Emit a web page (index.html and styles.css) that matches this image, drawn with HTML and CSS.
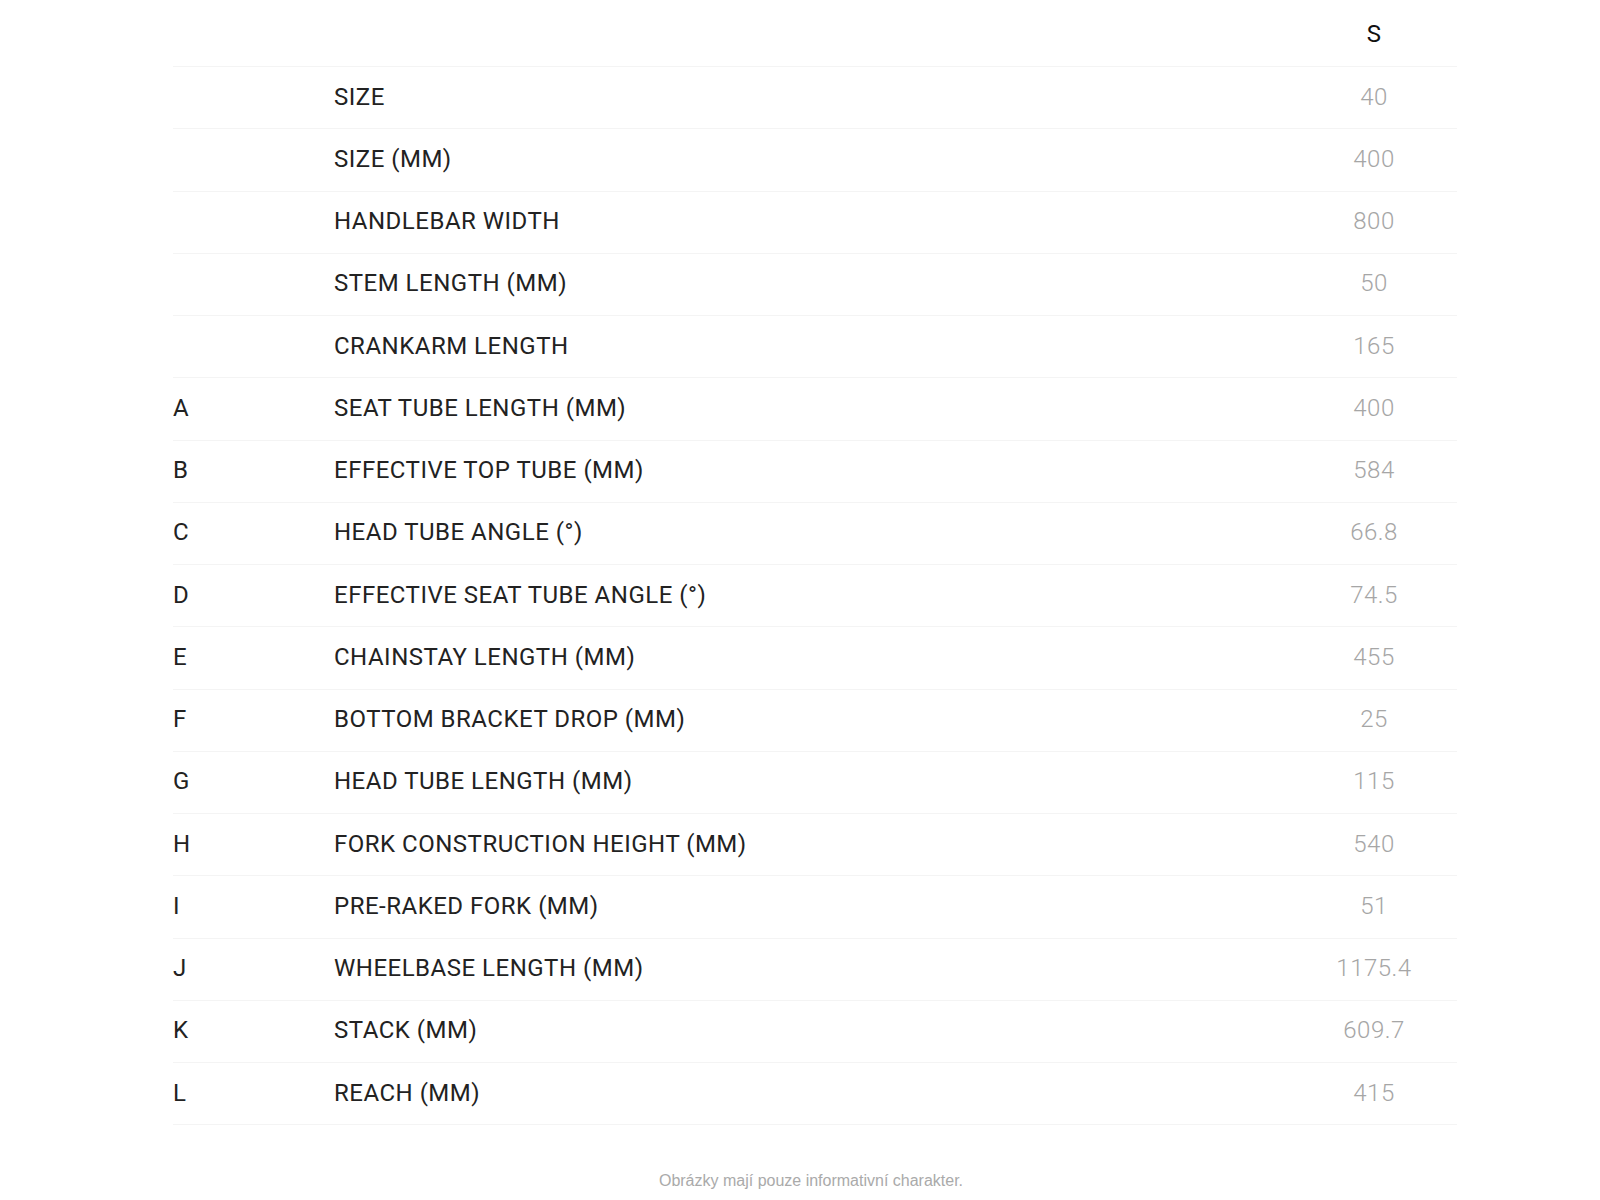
FILE: index.html
```html
<!DOCTYPE html>
<html lang="cs">
<head>
  <meta charset="UTF-8">
  <title>Geometrie</title>
  <link rel="stylesheet" href="styles.css">
</head>
<body>
  <div class="geo-table">
    <div class="geo-row head">
      <span class="key"></span>
      <span class="label"></span>
      <span class="val">S</span>
    </div>
    <div class="geo-row"><span class="key"></span><span class="label">SIZE</span><span class="val">40</span></div>
    <div class="geo-row"><span class="key"></span><span class="label">SIZE (MM)</span><span class="val">400</span></div>
    <div class="geo-row"><span class="key"></span><span class="label">HANDLEBAR WIDTH</span><span class="val">800</span></div>
    <div class="geo-row"><span class="key"></span><span class="label">STEM LENGTH (MM)</span><span class="val">50</span></div>
    <div class="geo-row"><span class="key"></span><span class="label">CRANKARM LENGTH</span><span class="val">165</span></div>
    <div class="geo-row"><span class="key">A</span><span class="label">SEAT TUBE LENGTH (MM)</span><span class="val">400</span></div>
    <div class="geo-row"><span class="key">B</span><span class="label">EFFECTIVE TOP TUBE (MM)</span><span class="val">584</span></div>
    <div class="geo-row"><span class="key">C</span><span class="label">HEAD TUBE ANGLE (°)</span><span class="val">66.8</span></div>
    <div class="geo-row"><span class="key">D</span><span class="label">EFFECTIVE SEAT TUBE ANGLE (°)</span><span class="val">74.5</span></div>
    <div class="geo-row"><span class="key">E</span><span class="label">CHAINSTAY LENGTH (MM)</span><span class="val">455</span></div>
    <div class="geo-row"><span class="key">F</span><span class="label">BOTTOM BRACKET DROP (MM)</span><span class="val">25</span></div>
    <div class="geo-row"><span class="key">G</span><span class="label">HEAD TUBE LENGTH (MM)</span><span class="val">115</span></div>
    <div class="geo-row"><span class="key">H</span><span class="label">FORK CONSTRUCTION HEIGHT (MM)</span><span class="val">540</span></div>
    <div class="geo-row"><span class="key">I</span><span class="label">PRE-RAKED FORK (MM)</span><span class="val">51</span></div>
    <div class="geo-row"><span class="key">J</span><span class="label">WHEELBASE LENGTH (MM)</span><span class="val">1175.4</span></div>
    <div class="geo-row"><span class="key">K</span><span class="label">STACK (MM)</span><span class="val">609.7</span></div>
    <div class="geo-row"><span class="key">L</span><span class="label">REACH (MM)</span><span class="val">415</span></div>
  </div>
  <p class="note">Obrázky mají pouze informativní charakter.</p>
</body>
</html>
```

FILE: styles.css
```css
body {
  margin: 0;
  background: #fff;
  color: #222;
  font-family: Roboto, "Liberation Sans", Arial, sans-serif;
}

.geo-table {
  width: 1284px;
  margin-left: 173px;
}

.geo-row {
  display: grid;
  grid-template-columns: 161px 1fr 166px;
  align-items: center;
  height: 62.25px;
  box-sizing: border-box;
  padding-bottom: 2px;
  border-bottom: 1px solid #f4f4f4;
  font-size: 24px;
  letter-spacing: 0.5px;
}

.geo-row.head {
  height: 67px;
  padding: 2px 0 0 0;
}

.key,
.label {
  color: #222;
}

.val {
  text-align: center;
  color: #a6a6a6;
  font-weight: 300;
}

.head .val {
  color: #111;
  font-weight: 400;
}

.note {
  margin: 47px 0 0 0;
  padding-left: 22px;
  text-align: center;
  font-family: "Liberation Sans", Arial, sans-serif;
  font-size: 16px;
  color: #aaa;
}
```
